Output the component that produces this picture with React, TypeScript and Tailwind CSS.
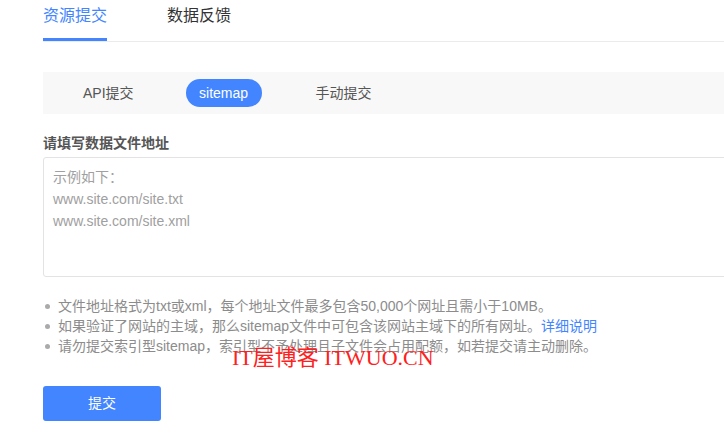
import React from "react";

export default function App() {
  const font = { fontFamily: '"Liberation Sans", "Noto Sans CJK SC", sans-serif' };
  return (
    <div className="relative h-[441px] w-[724px] overflow-hidden bg-white" style={font}>
      <div className="w-[800px] pl-[43px]">
        {/* top tabs */}
        <div className="flex h-[42px] items-start border-b border-[#ebebeb]">
          <div className="flex h-[41px] flex-col justify-between">
            <span className="pt-[4px] text-[16px] leading-[24px] text-[#4285ff]">资源提交</span>
            <span className="block h-[3px] w-[64px] bg-[#4285ff]" />
          </div>
          <span className="ml-[60px] pt-[4px] text-[16px] leading-[24px] text-[#333]">数据反馈</span>
        </div>

        {/* sub tabs */}
        <div className="mt-[30px] flex h-[42px] items-center bg-[#f8f8f8]">
          <span className="ml-[40px] text-[14px] text-[#555]">API提交</span>
          <span className="ml-[52px] flex h-[28px] w-[76px] items-center justify-center rounded-full bg-[#4285ff] text-[14px] text-white">
            sitemap
          </span>
          <span className="ml-[54px] text-[14px] text-[#555]">手动提交</span>
        </div>

        <div className="mt-[18px] text-[14px] font-bold leading-[22px] text-[#555]">请填写数据文件地址</div>

        <div className="mt-[3px] h-[120px] rounded-[3px] border border-[#e3e3e3] px-[9px] pt-[8px] text-[14px] leading-[22px] text-[#a0a0a0]">
          <div>示例如下：</div>
          <div>www.site.com/site.txt</div>
          <div>www.site.com/site.xml</div>
        </div>

        <ul className="mt-[19px] text-[14px] leading-[20px] text-[#8c8c8c]">
          <li className="flex items-center">
            <span className="mr-[8px] ml-[2px] h-[5px] w-[5px] rounded-full bg-[#aaa]" />
            文件地址格式为txt或xml，每个地址文件最多包含50,000个网址且需小于10MB。
          </li>
          <li className="flex items-center">
            <span className="mr-[8px] ml-[2px] h-[5px] w-[5px] rounded-full bg-[#aaa]" />
            如果验证了网站的主域，那么sitemap文件中可包含该网站主域下的所有网址。
            <span className="text-[#4285ff]">详细说明</span>
          </li>
          <li className="flex items-center">
            <span className="mr-[8px] ml-[2px] h-[5px] w-[5px] rounded-full bg-[#aaa]" />
            请勿提交索引型sitemap，索引型不予处理且子文件会占用配额，如若提交请主动删除。
          </li>
        </ul>

        <button className="mt-[30px] flex h-[35px] w-[118px] items-center justify-center rounded-[3px] bg-[#4285ff] text-[14px] text-white">
          提交
        </button>
      </div>

      <div
        className="absolute left-[232px] top-[345px] text-[22px] leading-[26px] text-[#ff2020]"
        style={{ fontFamily: '"Liberation Serif", "Noto Sans CJK SC", serif' }}
      >
        IT屋博客 ITWUO.CN
      </div>
    </div>
  );
}
